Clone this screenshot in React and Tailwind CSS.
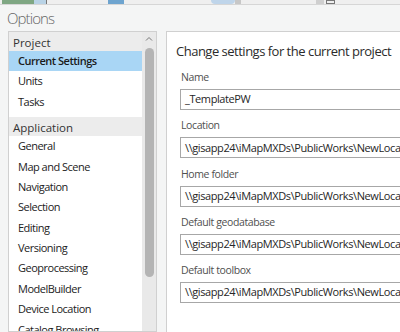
import React from "react";

const font = { fontFamily: '"Open Sans", "Noto Sans", sans-serif' };

function Row({ children, selected }) {
  return (
    <div
      className={
        "h-[20.4px] shrink-0 flex items-center pl-[9px] text-[11px] tracking-[-0.5px] whitespace-nowrap " +
        (selected ? "bg-[#a9d6f5] font-semibold text-[#1a1a1a]" : "text-[#222]")
      }
    >
      {children}
    </div>
  );
}

function Header({ children, className }) {
  return (
    <div
      className={
        "h-[19px] shrink-0 flex items-center pl-[4px] pt-[2px] bg-[#ececec] text-[11.5px] text-[#333] whitespace-nowrap " +
        (className || "")
      }
    >
      {children}
    </div>
  );
}

function Field({ label, value }) {
  return (
    <div className="flex flex-col shrink-0">
      <div className="h-[20px] flex items-center text-[10.5px] tracking-[-0.4px] text-[#505050] pl-[5px] whitespace-nowrap">
        {label}
      </div>
      <div className="mt-[1px] ml-[4px] h-[21px] w-[400px] border border-[#a7a7a7] bg-white flex items-center pl-[4px] text-[11px] tracking-[-0.4px] text-[#262626] whitespace-nowrap overflow-hidden">
        {value}
      </div>
      <div className="h-[6.3px]" />
    </div>
  );
}

export default function App() {
  const path = "\\\\gisapp24\\iMapMXDs\\PublicWorks\\NewLocation";
  return (
    <div className="w-[400px] h-[332px] overflow-hidden bg-[#f4f5f5] flex flex-col" style={font}>
      {/* top strip */}
      <div className="h-[5px] flex shrink-0 border-b border-[#d6d6d6] bg-[#efefef]">
        <div className="w-[2px]" />
        <div className="w-[32px] h-[4px] bg-[#7fa783]" />
        <div className="w-[12px] h-[4px] bg-[#b9d3e6]" />
        <div className="w-[1px] h-[4px] bg-[#777]" />
        <div className="w-[61px]" />
        <div className="w-[16px] h-[4px] bg-[#6ea4cf]" />
        <div className="w-[87px]" />
        <div className="w-[24px] h-[4px] bg-[#bfd5ea] rounded-b-full" />
        <div className="w-[6px] h-[4px] bg-[#c7c7c7]" />
        <div className="w-[75px]" />
        <div className="w-[8px] h-[4px] bg-[#cfcfcf]" />
        <div className="w-[2px]" />
        <div className="w-[9px] h-[4px] border border-[#777]" />
      </div>
      {/* title */}
      <div className="h-[26px] shrink-0 flex items-center pl-[7px] pt-[1px] text-[15px] font-light tracking-[-0.9px] text-[#666]">
        Options
      </div>
      {/* body */}
      <div className="flex flex-1 min-h-0">
        {/* left panel */}
        <div className="ml-[8px] w-[149px] border border-[#d0d0d0] bg-white flex overflow-hidden">
          <div className="w-[133px] shrink-0 flex flex-col">
            <Header className="h-[18px] pt-[1px]">Project</Header>
            <Row selected>Current Settings</Row>
            <Row>Units</Row>
            <Row>Tasks</Row>
            <Header className="mt-[5px]">Application</Header>
            <Row>General</Row>
            <Row>Map and Scene</Row>
            <Row>Navigation</Row>
            <Row>Selection</Row>
            <Row>Editing</Row>
            <Row>Versioning</Row>
            <Row>Geoprocessing</Row>
            <Row>ModelBuilder</Row>
            <Row>Device Location</Row>
            <Row>Catalog Browsing</Row>
          </div>
          <div className="w-[14px] shrink-0 bg-[#e9e9e9] flex flex-col items-center">
            <svg width="8" height="6" viewBox="0 0 8 6" className="mt-[4px] shrink-0">
              <path d="M1 4.5 L4 1.5 L7 4.5" fill="none" stroke="#777" strokeWidth="1" />
            </svg>
            <div className="mt-[6px] w-[9px] h-[229px] shrink-0 rounded-full bg-[#b4b4b4]" />
          </div>
        </div>
        {/* right panel */}
        <div className="ml-[9px] flex-1 border-l border-t border-[#d0d0d0] bg-white flex flex-col pl-[9px] overflow-hidden">
          <div className="h-[33px] shrink-0 flex items-end pb-[4px] text-[13px] tracking-[-0.5px] text-[#2b2b2b] whitespace-nowrap">
            Change settings for the current project
          </div>
          <div className="h-[3px] shrink-0" />
          <Field label="Name" value="_TemplatePW" />
          <Field label="Location" value={path} />
          <Field label="Home folder" value={path} />
          <Field label="Default geodatabase" value={path} />
          <Field label="Default toolbox" value={path} />
        </div>
      </div>
    </div>
  );
}
